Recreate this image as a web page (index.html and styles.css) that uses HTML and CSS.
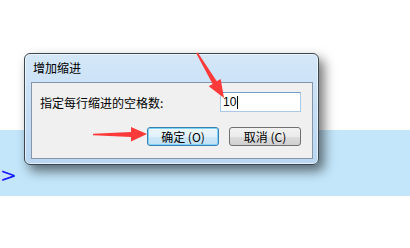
FILE: index.html
```html
<!DOCTYPE html>
<html>
<head>
<meta charset="utf-8">
<link rel="stylesheet" href="styles.css">
</head>
<body>
<div class="page">
  <div class="top"></div>
  <div class="band"><span class="prompt">&gt;</span></div>

  <div class="dialog">
    <div class="title">增加缩进</div>
    <div class="panel">
      <div class="row">
        <span class="label">指定每行缩进的空格数:</span>
        <div class="input">10<span class="caret"></span></div>
      </div>
      <div class="buttons">
        <button class="btn default">确定 (O)</button>
        <button class="btn">取消 (C)</button>
      </div>
    </div>
  </div>

  <svg class="arrows" width="410" height="248" viewBox="0 0 410 248">
    <polygon points="196.3,53.4 197.7,52.6 216.8,81.3 220.7,79 224,98 208.7,86.2 212.6,83.9" fill="#fd3a3a"/>
    <polygon points="93,133.7 131,132 131,127 147,134 131,141.5 131,137 93,135.3" fill="#fd3a3a"/>
  </svg>
</div>
</body>
</html>
```

FILE: styles.css
```css
html, body {
  margin: 0;
  padding: 0;
  background: #ffffff;
}
body {
  font-family: "Noto Sans CJK SC", "Noto Sans", sans-serif;
  font-size: 12px;
}
.page {
  position: relative;
  width: 410px;
  height: 248px;
  overflow: hidden;
}
.top {
  height: 130px;
}
.band {
  height: 66px;
  background: #c3e6fa;
  position: relative;
}
.prompt {
  position: absolute;
  left: 0;
  top: 35px;
  color: #1a1aff;
  font-family: "DejaVu Sans", sans-serif;
  font-size: 20px;
  line-height: 20px;
}
.dialog {
  position: absolute;
  left: 24px;
  top: 53px;
  width: 282px;
  height: 105px;
  border: 1px solid #3a4652;
  border-radius: 6px;
  background: linear-gradient(to bottom, #d4e7f8 0%, #c6def5 50%, #b9d6f2 100%);
  box-shadow: 5px 6px 12px rgba(0, 0, 0, 0.55), inset 0 0 0 1px rgba(255,255,255,0.6);
  display: flex;
  flex-direction: column;
  padding: 0 5px 5px 6px;
}
.title {
  height: 28px;
  line-height: 28px;
  padding-left: 2px;
  color: #000;
  font-size: 12px;
}
.panel {
  flex: 1;
  background: #f0f0f0;
  border: 1px solid #8596a8;
  padding: 9px 11px 0 8px;
}
.row {
  display: flex;
  justify-content: space-between;
  align-items: center;
  height: 20px;
}
.label {
  color: #000;
}
.input {
  width: 77px;
  height: 18px;
  border: 1px solid #a9c8e8;
  border-top-color: #6f9cc9;
  background: #fff;
  font-family: "Liberation Sans", sans-serif;
  font-size: 12px;
  line-height: 18px;
  padding-left: 2px;
  display: flex;
  align-items: center;
}
.caret {
  display: inline-block;
  width: 1px;
  height: 13px;
  background: #000;
  margin-left: 1px;
}
.buttons {
  display: flex;
  justify-content: flex-end;
  gap: 10px;
  margin-top: 15px;
}
.btn {
  width: 72px;
  height: 19px;
  padding: 0;
  margin: 0;
  border: 1px solid #707070;
  border-radius: 3px;
  background: linear-gradient(to bottom, #f2f2f2 0%, #ebebeb 50%, #dddddd 51%, #cfcfcf 100%);
  font-family: "Noto Sans CJK SC", sans-serif;
  font-size: 12px;
  line-height: 16px;
  color: #000;
}
.btn.default {
  border-color: #3c7fb1;
  box-shadow: inset 0 0 0 1px #7fd3f8;
  background: linear-gradient(to bottom, #eef7fc 0%, #e0f1fb 50%, #cfe8f7 51%, #c0e0f3 100%);
}
.arrows {
  position: absolute;
  left: 0;
  top: 0;
}
```
